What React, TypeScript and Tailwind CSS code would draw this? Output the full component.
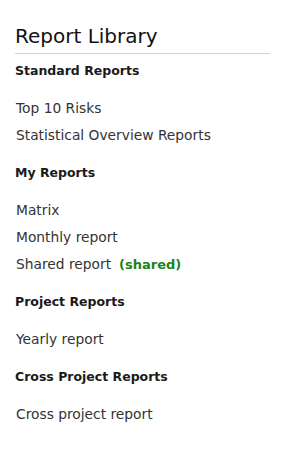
const sections = [
  { title: "Standard Reports", items: [{ name: "Top 10 Risks" }, { name: "Statistical Overview Reports" }] },
  {
    title: "My Reports",
    items: [{ name: "Matrix" }, { name: "Monthly report" }, { name: "Shared report", shared: true }],
  },
  { title: "Project Reports", items: [{ name: "Yearly report" }] },
  { title: "Cross Project Reports", items: [{ name: "Cross project report" }] },
];

export default function App() {
  return (
    <div
      className="min-h-[463px] bg-white px-[15px] pt-[24px] text-[#222]"
      style={{ fontFamily: '"DejaVu Sans", "Liberation Sans", sans-serif' }}
    >
      <h1 className="text-[20px] leading-[24px] text-[#111]">Report Library</h1>
      <div className="mt-[5px] mr-[-4px] h-px bg-[#d4d0cc]" />
      <div className="pt-[8px]">
        {sections.map((s) => (
          <div key={s.title}>
            <h2 className="text-[12.5px] leading-[18px] font-bold text-[#1a1a1a]">{s.title}</h2>
            <ul className="mt-[15px] mb-[15px]">
              {s.items.map((i) => (
                <li key={i.name} className="pl-px text-[13.8px] leading-[27px] text-[#333]">
                  {i.name}
                  {i.shared && (
                    <span className="ml-[8px] text-[13px] font-bold text-[#1a841a]">(shared)</span>
                  )}
                </li>
              ))}
            </ul>
          </div>
        ))}
      </div>
    </div>
  );
}
